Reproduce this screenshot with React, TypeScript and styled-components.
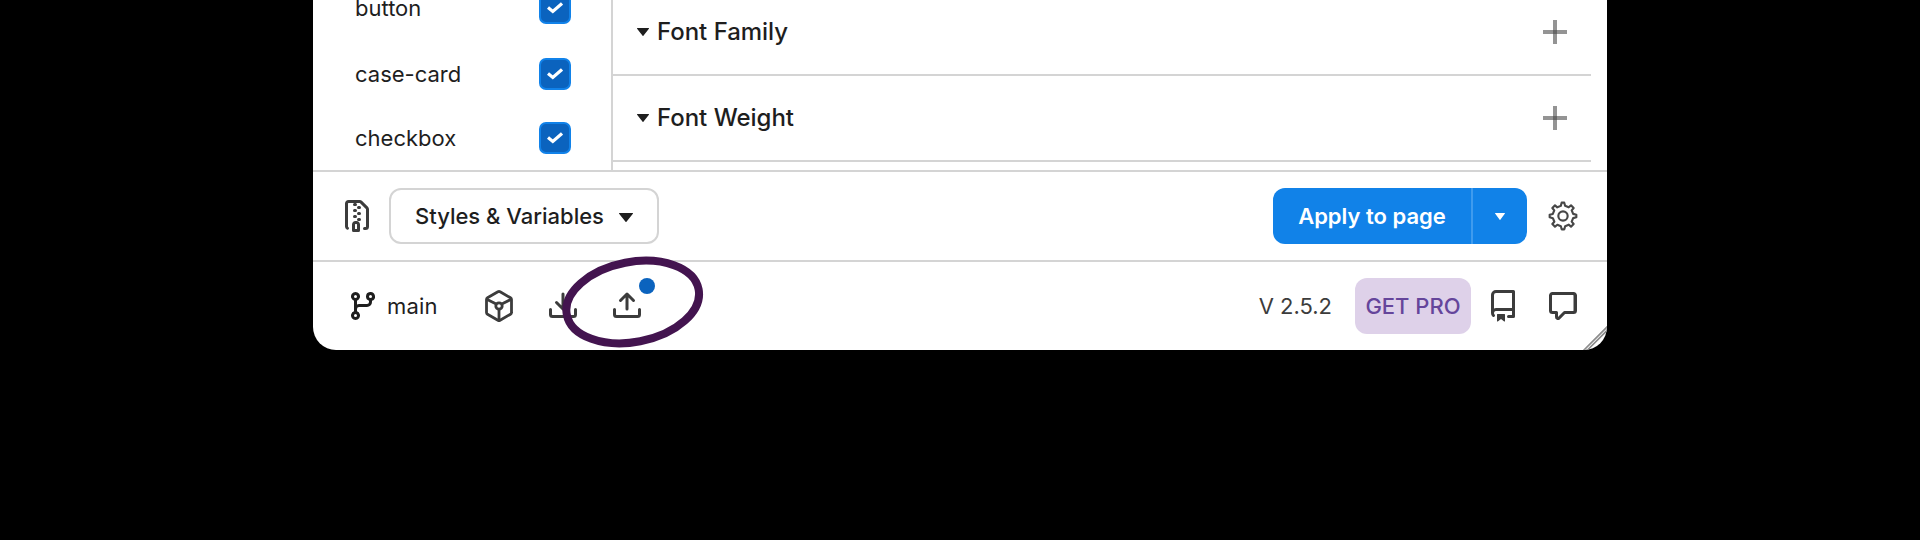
import React from 'react';
import styled, { createGlobalStyle } from 'styled-components';

const line = '#d4d4d4';
const ink = '#1e1e1e';
const iconInk = '#3c3c3c';

const GlobalStyle = createGlobalStyle`
  * { box-sizing: border-box; }
  body { margin: 0; background: #000; }
  button { font: inherit; margin: 0; padding: 0; border: 0; background: none; letter-spacing: inherit; }
`;

const Page = styled.main`
  height: 540px;
  background: #000;
  overflow: hidden;
  font-family: Inter, 'Liberation Sans', sans-serif;
  font-size: 22px;
  line-height: 32px;
  color: ${ink};
`;

const PluginWindow = styled.div`
  position: relative;
  width: 1294px;
  height: 350px;
  margin-left: 313px;
  background: #fff;
  border-radius: 0 0 23px 23px;
  overflow: hidden;
  display: flex;
  flex-direction: column;
`;

const Body = styled.div`
  height: 170px;
  display: flex;
  overflow: hidden;
`;

const Sidebar = styled.div`
  width: 300px;
  border-right: 2px solid ${line};
  display: flex;
  flex-direction: column;
`;

const SetGroup = styled.div<{ $shift?: number }>`
  margin-top: ${(p) => p.$shift ?? 0}px;
`;

const SetRow = styled.div`
  height: 64px;
  padding: 0 40px 0 42px;
  display: flex;
  align-items: center;
  justify-content: space-between;
`;

const Label = styled.span<{ $spacing?: number; $weight?: number; $color?: string; $size?: number }>`
  white-space: nowrap;
  letter-spacing: ${(p) => p.$spacing ?? 0}px;
  font-weight: ${(p) => p.$weight ?? 400};
  font-size: ${(p) => p.$size ?? 22}px;
  color: ${(p) => p.$color ?? ink};
`;

const Check = styled.span`
  width: 32px;
  height: 32px;
  border: 2px solid #1182e9;
  border-radius: 7px;
  background: #0b63be;
  display: flex;
  align-items: center;
  justify-content: center;
`;

const Sections = styled.div`
  width: 978px;
  margin-top: -10px;
`;

const Section = styled.div`
  height: 86px;
  padding: 0 24px 0 24px;
  border-bottom: 2px solid ${line};
  display: flex;
  align-items: center;
`;

const SectionName = styled(Label)`
  flex: 1;
  margin-left: 8px;
`;

const Bar = styled.div`
  height: 90px;
  border-top: 2px solid ${line};
  display: flex;
  align-items: center;
`;

const Spacer = styled.span`
  flex: 1;
`;

const IconBox = styled.span<{ $ml?: number; $mr?: number }>`
  position: relative;
  display: flex;
  width: 32px;
  height: 32px;
  align-items: center;
  justify-content: center;
  margin-left: ${(p) => p.$ml ?? 0}px;
  margin-right: ${(p) => p.$mr ?? 0}px;
`;

const BranchButton = styled.button`
  width: 138px;
  padding-left: 34px;
  display: flex;
  align-items: center;
  gap: 8px;
`;

const Select = styled.button`
  width: 270px;
  height: 56px;
  margin-left: 16px;
  padding: 0 24px;
  border: 2px solid ${line};
  border-radius: 12px;
  display: flex;
  align-items: center;
  justify-content: space-between;
  color: ${ink};
`;

const SelectCaret = styled.span`
  display: flex;
  padding-top: 3px;
`;

const Split = styled.div`
  width: 254px;
  height: 56px;
  border-radius: 12px;
  background: #1182e8;
  overflow: hidden;
  display: flex;
`;

const Apply = styled.button`
  width: 200px;
  border-right: 2px solid #3f9bee;
  display: flex;
  align-items: center;
  justify-content: center;
`;

const More = styled.button`
  flex: 1;
  display: flex;
  align-items: center;
  justify-content: center;
`;

const Pro = styled.button`
  width: 116px;
  height: 56px;
  margin-left: 23px;
  border-radius: 12px;
  background: #ded1e9;
  display: flex;
  align-items: center;
  justify-content: center;
`;

const Dot = styled.span`
  position: absolute;
  left: 28px;
  top: -12px;
  width: 16px;
  height: 16px;
  border-radius: 50%;
  background: #0b63be;
`;

const Highlight = styled.svg`
  position: absolute;
  left: 240px;
  top: 250px;
`;

const Grip = styled.svg`
  position: absolute;
  right: 0;
  bottom: 0;
`;

const Glyph = ({ d, color = iconInk }: { d: string; color?: string }) => (
  <svg width="32" height="32" viewBox="0 0 16 16" fill={color} fillRule="evenodd">
    <path d={d} />
  </svg>
);

const Caret = ({ w, h, color = ink }: { w: number; h: number; color?: string }) => (
  <svg width={w} height={h} viewBox="0 0 12 8" preserveAspectRatio="none" fill={color}>
    <path d="M0.4 0h11.2a.4.4 0 0 1 .3.7L6.4 7.7a.5.5 0 0 1-.8 0L.1.7A.4.4 0 0 1 .4 0Z" />
  </svg>
);

const Plus = () => (
  <svg width="24" height="24" viewBox="0 0 24 24">
    <path fill="#949494" d="M10 0h4v24h-4zM0 10h24v4H0z" />
    <path fill="#676767" d="M10 10h4v4h-4z" />
  </svg>
);

const icons = {
  zip: 'M3.5 1.75v11.5c0 .09.048.173.126.217a.75.75 0 0 1-.752 1.298A1.748 1.748 0 0 1 2 13.25V1.75C2 .784 2.784 0 3.75 0h5.586c.464 0 .909.185 1.237.513l2.914 2.914c.329.328.513.773.513 1.237v8.586A1.75 1.75 0 0 1 12.25 15h-.5a.75.75 0 0 1 0-1.5h.5a.25.25 0 0 0 .25-.25V4.664a.25.25 0 0 0-.073-.177L9.513 1.573a.25.25 0 0 0-.177-.073H7.25a.75.75 0 0 1 0 1.5h-.5a.75.75 0 0 1 0-1.5h-3a.25.25 0 0 0-.25.25Zm3.75 8.75h.5c.966 0 1.75.784 1.75 1.75v3a.75.75 0 0 1-.75.75h-2.5a.75.75 0 0 1-.75-.75v-3c0-.966.784-1.75 1.75-1.75ZM6 5.25a.75.75 0 0 1 .75-.75h.5a.75.75 0 0 1 0 1.5h-.5A.75.75 0 0 1 6 5.25Zm.75 2.25h.5a.75.75 0 0 1 0 1.5h-.5a.75.75 0 0 1 0-1.5ZM8 6.75A.75.75 0 0 1 8.75 6h.5a.75.75 0 0 1 0 1.5h-.5A.75.75 0 0 1 8 6.75ZM8.75 3h.5a.75.75 0 0 1 0 1.5h-.5a.75.75 0 0 1 0-1.5ZM8 9.75A.75.75 0 0 1 8.75 9h.5a.75.75 0 0 1 0 1.5h-.5A.75.75 0 0 1 8 9.75Zm-1 2.5v2.25h1v-2.25a.25.25 0 0 0-.25-.25h-.5a.25.25 0 0 0-.25.25Z',
  repo: 'M2 2.5A2.5 2.5 0 0 1 4.5 0h8.75a.75.75 0 0 1 .75.75v12.5a.75.75 0 0 1-.75.75h-2.5a.75.75 0 0 1 0-1.5h1.75v-2h-8a1 1 0 0 0-.714 1.7.75.75 0 1 1-1.072 1.05A2.495 2.495 0 0 1 2 11.5Zm10.5-1h-8a1 1 0 0 0-1 1v6.708A2.486 2.486 0 0 1 4.5 9h8ZM5 12.25a.25.25 0 0 1 .25-.25h3.5a.25.25 0 0 1 .25.25v3.25a.25.25 0 0 1-.4.2l-1.45-1.087a.249.249 0 0 0-.3 0L5.4 15.7a.25.25 0 0 1-.4-.2Z',
  comment: 'M1 2.75C1 1.784 1.784 1 2.75 1h10.5c.966 0 1.75.784 1.75 1.75v7.5A1.75 1.75 0 0 1 13.25 12H9.06l-2.573 2.573A1.458 1.458 0 0 1 4 13.543V12H2.75A1.75 1.75 0 0 1 1 10.25Zm1.75-.25a.25.25 0 0 0-.25.25v7.5c0 .138.112.25.25.25h2a.75.75 0 0 1 .75.75v2.19l2.72-2.72a.749.749 0 0 1 .53-.22h4.25a.25.25 0 0 0 .25-.25v-7.5a.25.25 0 0 0-.25-.25Z',
  branch: 'M9.5 3.25a2.25 2.25 0 1 1 3 2.122V6A2.5 2.5 0 0 1 10 8.5H6a1 1 0 0 0-1 1v1.128a2.251 2.251 0 1 1-1.5 0V5.372a2.25 2.25 0 1 1 1.5 0v1.836A2.493 2.493 0 0 1 6 7h4a1 1 0 0 0 1-1v-.628A2.25 2.25 0 0 1 9.5 3.25Zm-6 0a.75.75 0 1 0 1.5 0 .75.75 0 0 0-1.5 0Zm8.25-.75a.75.75 0 1 0 0 1.5.75.75 0 0 0 0-1.5ZM4.25 12a.75.75 0 1 0 0 1.5.75.75 0 0 0 0-1.5Z',
  download: 'M2.75 14A1.75 1.75 0 0 1 1 12.25v-2.5a.75.75 0 0 1 1.5 0v2.5c0 .138.112.25.25.25h10.5a.25.25 0 0 0 .25-.25v-2.5a.75.75 0 0 1 1.5 0v2.5A1.75 1.75 0 0 1 13.25 14ZM7.25 7.689V2a.75.75 0 0 1 1.5 0v5.689l1.97-1.969a.749.749 0 1 1 1.06 1.06l-3.25 3.25a.749.749 0 0 1-1.06 0L4.22 6.78a.749.749 0 1 1 1.06-1.06l1.97 1.969Z',
  upload: 'M2.75 14A1.75 1.75 0 0 1 1 12.25v-2.5a.75.75 0 0 1 1.5 0v2.5c0 .138.112.25.25.25h10.5a.25.25 0 0 0 .25-.25v-2.5a.75.75 0 0 1 1.5 0v2.5A1.75 1.75 0 0 1 13.25 14ZM11.78 4.72a.749.749 0 1 1-1.06 1.06L8.75 3.811V9.5a.75.75 0 0 1-1.5 0V3.811L5.28 5.78a.749.749 0 1 1-1.06-1.06l3.25-3.25a.749.749 0 0 1 1.06 0l3.25 3.25Z',
};

const Cube = () => (
  <svg width="32" height="32" viewBox="0 0 32 32" fill="none" stroke={iconInk} strokeWidth="2.8" strokeLinejoin="round">
    <path d="M14.9 1.8a2.2 2.2 0 0 1 2.2 0l10.4 6a2 2 0 0 1 1 1.8v12.8a2 2 0 0 1-1 1.8l-10.4 6a2.2 2.2 0 0 1-2.2 0l-10.4-6a2 2 0 0 1-1-1.8V9.6a2 2 0 0 1 1-1.8Z" />
    <circle cx="16" cy="16" r="3.2" />
    <path d="M4.2 9.4l9 4.6M27.8 9.4L18.8 14M16 19.5V30" />
  </svg>
);

const Gear = () => (
  <svg width="34" height="34" viewBox="0 0 24 24" fill="none" stroke="#474747" strokeWidth="1.6" strokeLinejoin="round">
    <circle cx="12" cy="12" r="3.5" />
    <path d="M19.6224 10.3954L18.5247 7.7448L20 6L18 4L16.2647 5.48295L13.5578 4.36974L12.9353 2H10.981L10.3491 4.40113L7.70441 5.51596L6 4L4 6L5.45337 7.78885L4.3725 10.4463L2 11V13L4.40111 13.6555L5.51575 16.2997L4 18L6 20L7.79116 18.5403L10.397 19.6123L11 22H13L13.6045 19.6132L16.2551 18.5155C16.6969 18.8313 18 20 18 20L20 18L18.5159 16.2494L19.6139 13.598L21.9999 12.9772L22 11L19.6224 10.3954Z" />
  </svg>
);

const TokenSet = ({ name }: { name: string }) => (
  <SetRow>
    <Label>{name}</Label>
    <Check>
      <svg width="16" height="12" viewBox="0 0 16 12" fill="none" stroke="#fff" strokeWidth="3.2">
        <path d="M1 5.5L5.8 9.5L15 1.4" />
      </svg>
    </Check>
  </SetRow>
);

const TokenSection = ({ name }: { name: string }) => (
  <Section>
    <Caret w={12} h={8} />
    <SectionName $weight={500} $size={24} $spacing={-0.03}>{name}</SectionName>
    <Plus />
  </Section>
);

export default function App() {
  return (
    <Page>
      <GlobalStyle />
      <PluginWindow>
        <Body>
          <Sidebar>
            <SetGroup $shift={-24}>
              <TokenSet name="button" />
            </SetGroup>
            <SetGroup $shift={2}>
              <TokenSet name="case-card" />
              <TokenSet name="checkbox" />
            </SetGroup>
          </Sidebar>
          <Sections>
            <TokenSection name="Font Family" />
            <TokenSection name="Font Weight" />
          </Sections>
        </Body>
        <Bar>
          <IconBox $ml={28}><Glyph d={icons.zip} /></IconBox>
          <Select>
            <Label $weight={500}>Styles &amp; Variables</Label>
            <SelectCaret><Caret w={14} h={9} /></SelectCaret>
          </Select>
          <Spacer />
          <Split>
            <Apply><Label $weight={600} $color="#fff">Apply to page</Label></Apply>
            <More><Caret w={10} h={7} color="#fff" /></More>
          </Split>
          <IconBox $ml={20} $mr={28}><Gear /></IconBox>
        </Bar>
        <Bar>
          <BranchButton>
            <IconBox><Glyph d={icons.branch} color={ink} /></IconBox>
            <Label $spacing={0.2}>main</Label>
          </BranchButton>
          <IconBox $ml={32}><Cube /></IconBox>
          <IconBox $ml={32}><Glyph d={icons.download} /></IconBox>
          <IconBox $ml={32}>
            <Glyph d={icons.upload} />
            <Dot />
          </IconBox>
          <Spacer />
          <Label $color="#3c3c3c">V 2.5.2</Label>
          <Pro><Label $weight={550} $color="#65459b">GET PRO</Label></Pro>
          <IconBox $ml={16}><Glyph d={icons.repo} /></IconBox>
          <IconBox $ml={28} $mr={28}><Glyph d={icons.comment} /></IconBox>
        </Bar>
        <Grip width="26" height="26" viewBox="0 0 26 26" fill="none" stroke="#8c8c8c" strokeWidth="1.6">
          <path d="M2 27L27 2M5.5 27L27 5.5" />
        </Grip>
        <Highlight width="160" height="100" viewBox="0 0 160 100" fill="none">
          <ellipse cx="79.7" cy="52" rx="67.1" ry="40" transform="rotate(-10.85 79.7 52)" stroke="#43144f" strokeWidth="8" />
        </Highlight>
      </PluginWindow>
    </Page>
  );
}
